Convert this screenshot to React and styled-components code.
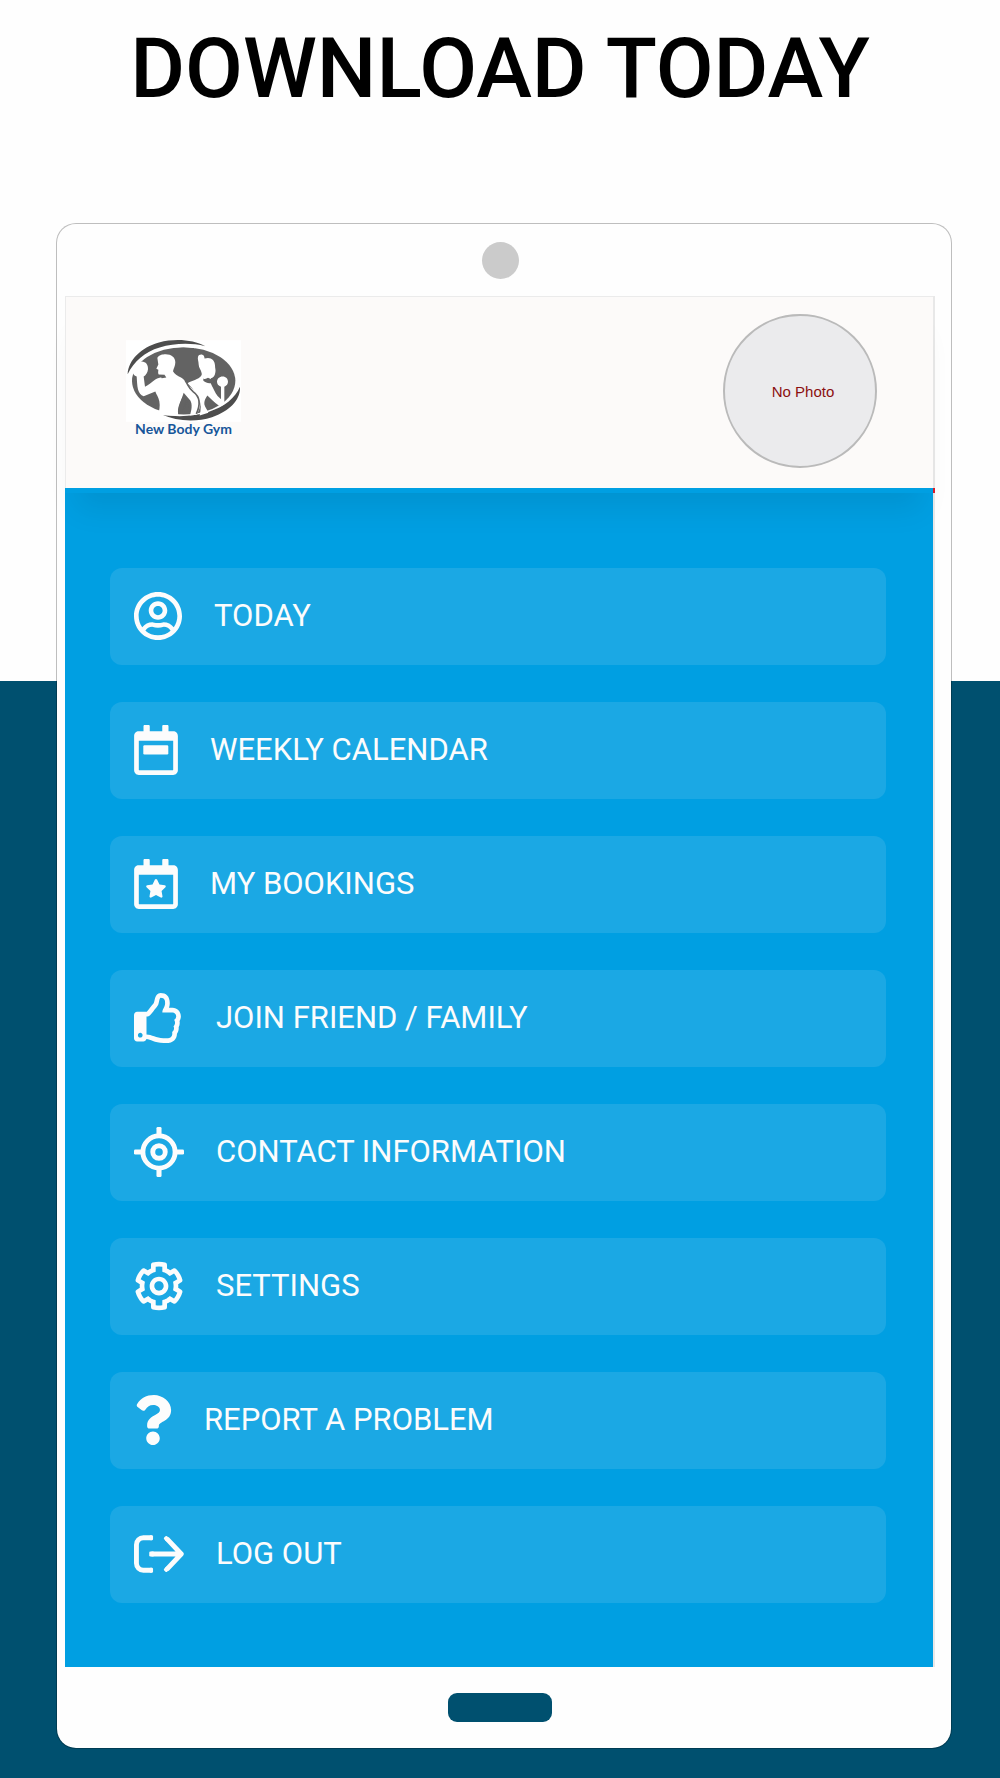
import React from 'react'
import styled, { createGlobalStyle } from 'styled-components'
import { FaQuestion, FaRegThumbsUp, FaRegUserCircle } from 'react-icons/fa'

const CALENDAR = 'M400 64h-48V12c0-6.6-5.4-12-12-12h-40c-6.6 0-12 5.4-12 12v52H160V12c0-6.6-5.4-12-12-12h-40c-6.6 0-12 5.4-12 12v52H48C21.5 64 0 85.5 0 112v352c0 26.5 21.5 48 48 48h352c26.5 0 48-21.5 48-48V112c0-26.5-21.5-48-48-48zm-6 400H54c-3.3 0-6-2.7-6-6V160h352v298c0 3.3-2.7 6-6 6z'

const CalendarDayIcon = () => (
    <svg viewBox='0 0 448 512' fill='currentColor' aria-hidden='true'>
        <path d={CALENDAR} />
        <rect x='94' y='208' width='256' height='94' rx='12' />
    </svg>
)

const CalendarStarIcon = () => (
    <svg viewBox='0 0 448 512' fill='currentColor' aria-hidden='true'>
        <path d={CALENDAR} />
        <path
            transform='translate(116 204) scale(.375)'
            d='M259.3 17.8L194 150.2 47.9 171.5c-26.2 3.8-36.7 36.1-17.7 54.6l105.7 103-25 145.5c-4.5 26.3 23.2 46 46.4 33.7L288 439.6l130.7 68.7c23.2 12.2 50.9-7.4 46.4-33.7l-25-145.5 105.7-103c19-18.5 8.5-50.8-17.7-54.6L382 150.2 316.7 17.8c-11.7-23.6-45.6-23.9-57.4 0z'
        />
    </svg>
)

const LocationIcon = () => (
    <svg viewBox='0 0 512 512' fill='none' stroke='currentColor' strokeWidth='50' aria-hidden='true'>
        <circle cx='256' cy='256' r='165' />
        <circle cx='256' cy='256' r='64' />
        <g fill='currentColor' stroke='none'>
            <rect x='230' y='0' width='52' height='96' rx='14' />
            <rect x='230' y='416' width='52' height='96' rx='14' />
            <rect x='0' y='230' width='96' height='52' rx='14' />
            <rect x='416' y='230' width='96' height='52' rx='14' />
        </g>
    </svg>
)

const CogIcon = () => (
    <svg viewBox='0 0 512 512' fill='currentColor' aria-hidden='true'>
        <path d='M452.515 237l31.843-18.382c9.426-5.441 13.996-16.542 11.177-27.054-11.404-42.531-33.842-80.547-64.058-110.797-7.68-7.688-19.575-9.246-28.985-3.811l-31.785 18.358a196.276 196.276 0 0 0-32.899-19.02V39.541a24.016 24.016 0 0 0-17.842-23.206c-41.761-11.107-86.117-11.121-127.93-.001-10.519 2.798-17.844 12.321-17.844 23.206v36.753a196.276 196.276 0 0 0-32.899 19.02l-31.785-18.358c-9.41-5.435-21.305-3.877-28.985 3.811-30.216 30.25-52.654 68.265-64.058 110.797-2.819 10.512 1.751 21.613 11.177 27.054L59.485 237a197.715 197.715 0 0 0 0 37.999l-31.843 18.382c-9.426 5.441-13.996 16.542-11.177 27.054 11.404 42.531 33.842 80.547 64.058 110.797 7.68 7.688 19.575 9.246 28.985 3.811l31.785-18.358a196.202 196.202 0 0 0 32.899 19.019v36.753a24.016 24.016 0 0 0 17.842 23.206c41.761 11.107 86.117 11.122 127.93.001 10.519-2.798 17.844-12.321 17.844-23.206v-36.753a196.34 196.34 0 0 0 32.899-19.019l31.785 18.358c9.41 5.435 21.305 3.877 28.985-3.811 30.216-30.25 52.654-68.266 64.058-110.797 2.819-10.512-1.751-21.613-11.177-27.054L452.515 275c1.22-12.65 1.22-25.35 0-38zm-52.679 63.019l43.819 25.289a200.138 200.138 0 0 1-33.849 58.528l-43.829-25.309c-31.984 27.397-36.659 30.077-76.168 44.029v50.599a200.917 200.917 0 0 1-67.618 0v-50.599c-39.504-13.95-44.196-16.642-76.168-44.029l-43.829 25.309a200.15 200.15 0 0 1-33.849-58.528l43.819-25.289c-7.63-41.299-7.634-46.719 0-88.038l-43.819-25.289c7.85-21.229 19.31-41.049 33.849-58.529l43.829 25.309c31.984-27.397 36.66-30.078 76.168-44.029V58.845a200.917 200.917 0 0 1 67.618 0v50.599c39.504 13.95 44.196 16.642 76.168 44.029l43.829-25.309a200.143 200.143 0 0 1 33.849 58.529l-43.819 25.289c7.631 41.3 7.634 46.718 0 88.037zM256 160c-52.935 0-96 43.065-96 96s43.065 96 96 96 96-43.065 96-96-43.065-96-96-96zm0 144c-26.468 0-48-21.532-48-48 0-26.467 21.532-48 48-48s48 21.533 48 48c0 26.468-21.532 48-48 48z' />
    </svg>
)

const SignOutIcon = () => (
    <svg viewBox='0 0 512 512' fill='none' stroke='currentColor' strokeWidth='50' strokeLinejoin='round' aria-hidden='true'>
        <path d='M182 90H96a71 71 0 0 0-71 71v190a71 71 0 0 0 71 71h86' />
        <path d='M178 256h290M336 98l148 158-148 158' />
        <g fill='currentColor' stroke='none'>
            <rect x='160' y='65' width='35' height='50' rx='12' />
            <rect x='160' y='397' width='35' height='50' rx='12' />
            <rect x='156' y='231' width='50' height='50' rx='12' />
            <rect x='308' y='78' width='50' height='42' rx='12' transform='rotate(47 333 99)' />
            <rect x='308' y='392' width='50' height='42' rx='12' transform='rotate(-47 333 413)' />
        </g>
    </svg>
)

const GymLogo = () => (
    <svg width='115' height='82' viewBox='47 44 345 245' role='img' aria-label='New Body Gym logo'>
        <rect x='47' y='44' width='345' height='245' fill='#fff' />
        <ellipse cx='220' cy='166' rx='155' ry='101' fill='#636363' />
        <path fill='#fff' d='M60 150C70 112 100 84 150 72c40-9 75-9 105-4l-20-12H120L52 110z' />
        <path fill='#4d4d4d' d='M52 146C54 104 92 66 146 51c50-13 103-8 139 11-44-11-94-9-137 4C103 79 71 108 52 146z' />
        <path fill='#4d4d4d' d='M389 184c2 38-30 72-84 91-50 16-106 12-151-8 46 9 98 6 142-8 48-16 79-42 93-75z' />
        {/* man */}
        <path
            fill='#fff'
            d='M141 97c5-9 15-11 25-11 17 0 29 9 29 24 0 10-5 18-7 27 3 8 14 13 24 19 10 6 14 14 21 22 12 12 29 18 34 32 7 18 3 40-8 58l-21 2c7-17 8-34 2-45l-20-23c-4 15-12 30-16 44-2 9-1 17 0 24l-60-1c2-14 6-27 3-42-3-13-9-20-12-29l-35 14c-9-2-14-11-17-20-3-13-3-27-4-39-9-3-14-11-12-20 1-12 13-25 27-25 13 0 20 11 19 23-1 11-7 18-13 22l4 31c11-5 20-14 31-22 6-5 18-6 29-8l-1-6-18-1c-3-5-1-9-1-14l-6-3 6-13z'
        />
        {/* woman */}
        <path
            fill='#fff'
            d='M263 94c2-8 14-9 18-2 2 4 1 6 2 7 17-6 31 4 31 21 0 9 3 14 1 21-1 9-5 15-13 17-5 9 1 18 5 27 6 12 11 25 22 33l3 3v-37c-8-3-12-8-12-15 0-9 7-16 17-16s16 7 16 16c0 7-4 12-11 15v44c-2 12-10 17-17 12-14-10-23-20-34-30-6 9-10 17-9 26 2 9 9 16 12 26l-26 8c4-17 5-34-1-48-8-22-20-36-37-48 10-7 22-8 31-14 7-4 15-9 13-17-2-10-9-16-9-26 0-9-4-16-2-23z'
        />
        <path fill='#636363' d='M279 159c5 3 9 1 14-2l11 5 8 3-9 8c-9 2-17-1-24-7zM150 149l14 1 4 6-14 2z' />
        <path fill='none' stroke='#636363' strokeWidth='5' d='M225 166c10 14 9 21 24 33 19 14 23 36 9 66' />
        <path fill='#636363' d='M220 208l8 14-14 42h-11c2-20 8-39 17-56zM231 227l9 37h-18c0-14 4-26 9-37z' />
    </svg>
)

const menu = [
    { label: 'TODAY', icon: FaRegUserCircle, width: 48 },
    { label: 'WEEKLY CALENDAR', icon: CalendarDayIcon, width: 44 },
    { label: 'MY BOOKINGS', icon: CalendarStarIcon, width: 44 },
    { label: 'JOIN FRIEND / FAMILY', icon: FaRegThumbsUp, width: 50 },
    { label: 'CONTACT INFORMATION', icon: LocationIcon, width: 50 },
    { label: 'SETTINGS', icon: CogIcon, width: 50 },
    { label: 'REPORT A PROBLEM', icon: FaQuestion, width: 38 },
    { label: 'LOG OUT', icon: SignOutIcon, width: 50 },
]

function App() {
    return (
        <>
            <GlobalStyle />
            <Page>
                <Title>DOWNLOAD TODAY</Title>
                <Device>
                    <Camera />
                    <Screen>
                        <Header>
                            <Brand>
                                <GymLogo />
                                <BrandName>New Body Gym</BrandName>
                            </Brand>
                            <Avatar>No Photo</Avatar>
                        </Header>
                        <Menu>
                            {menu.map(({ label, icon: Icon, width }) => (
                                <MenuItem key={label} href='#'>
                                    <IconBox $width={width}>
                                        <Icon />
                                    </IconBox>
                                    {label}
                                </MenuItem>
                            ))}
                        </Menu>
                    </Screen>
                    <HomeButton aria-label='Home' />
                </Device>
            </Page>
        </>
    )
}

const GlobalStyle = createGlobalStyle`
    * {
        box-sizing: border-box;
    }

    body {
        margin: 0;
        font-family: Roboto, sans-serif;
    }
`

const Page = styled.main`
    display: flow-root;
    min-height: 100vh;
    padding-bottom: 29px;
    background: linear-gradient(#fefefe 38.3%, #00506f 38.3%);
`

const Title = styled.h1`
    margin: 0 0 85px;
    font-size: 84px;
    font-weight: 500;
    line-height: 138px;
    text-align: center;
    color: #000;
`

const Device = styled.section`
    display: flex;
    flex-direction: column;
    align-items: center;
    margin: 0 48px 0 56px;
    padding: 18px 16px 26px 8px;
    border: 1px solid rgba(0, 0, 0, 0.25);
    border-radius: 20px;
    background: #fefefe;
    background-clip: padding-box;
`

const Camera = styled.div`
    width: 37px;
    height: 37px;
    margin-bottom: 17px;
    border-radius: 50%;
    background: #cbcbcb;
`

const Screen = styled.div`
    width: 100%;
    border-right: 2px solid #e8e8e8;
    background: #009fe2;
`

const Header = styled.header`
    position: relative;
    display: flex;
    align-items: center;
    justify-content: space-between;
    height: 197px;
    padding: 0 56px 3px 61px;
    border-top: 1px solid #ebebeb;
    border-bottom: 5px solid #009fe2;
    background: #fcfaf9;
    box-shadow: inset 1px 0 #ebebeb, 0 28px 28px -12px rgba(0, 0, 0, 0.08);

    &::after {
        content: '';
        position: absolute;
        right: -2px;
        bottom: -5px;
        width: 2px;
        height: 5px;
        background: #dc1a26;
    }
`

const Brand = styled.div`
    display: flex;
    flex-direction: column;
    align-items: center;
    padding-bottom: 7px;
`

const BrandName = styled.span`
    font-family: Lato, sans-serif;
    font-size: 14px;
    font-weight: 700;
    line-height: 14px;
    color: #17569a;
`

const Avatar = styled.div`
    display: flex;
    align-items: center;
    justify-content: center;
    width: 154px;
    height: 154px;
    padding-left: 6px;
    border: 2px solid #bababa;
    border-radius: 50%;
    background: #ebebed;
    font-family: "Liberation Sans", sans-serif;
    font-size: 15px;
    color: #8b1010;
`

const Menu = styled.nav`
    display: flex;
    flex-direction: column;
    gap: 37px;
    padding: 75px 47px 64px 45px;
`

const MenuItem = styled.a`
    position: relative;
    display: flex;
    align-items: center;
    gap: 32px;
    height: 97px;
    padding: 0 24px 2px;
    border-radius: 12px;
    background: #1ba8e4;
    font-size: 31px;
    color: #fcfcfc;
    text-decoration: none;
`

const IconBox = styled.span`
    width: ${({ $width }) => $width}px;
    height: 50px;

    svg {
        display: block;
        width: 100%;
        height: 100%;
    }
`

const HomeButton = styled.button`
    width: 104px;
    height: 29px;
    margin-top: 26px;
    padding: 0;
    border: 0;
    border-radius: 9px;
    background: #00506f;
`

export default App
